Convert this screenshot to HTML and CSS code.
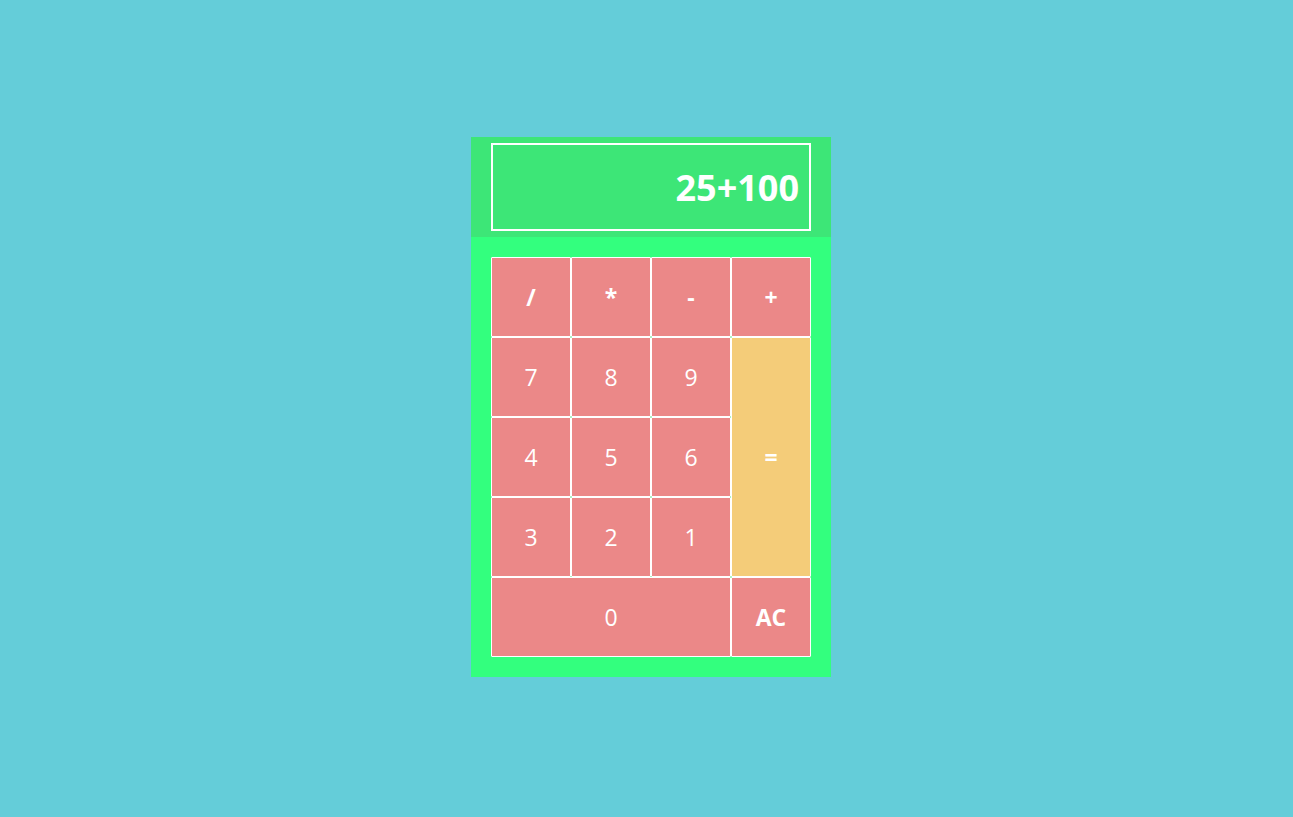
FILE: index.html
```html
<!DOCTYPE html>
<html>
<head>
<meta charset="utf-8">
<link rel="stylesheet" href="styles.css">
</head>
<body>
<div class="calc">
  <div class="top">
    <div class="display">25+100</div>
  </div>
  <div class="keys">
    <button class="key op">/</button>
    <button class="key op">*</button>
    <button class="key op">-</button>
    <button class="key op">+</button>
    <button class="key">7</button>
    <button class="key">8</button>
    <button class="key">9</button>
    <button class="key op eq">=</button>
    <button class="key">4</button>
    <button class="key">5</button>
    <button class="key">6</button>
    <button class="key">3</button>
    <button class="key">2</button>
    <button class="key">1</button>
    <button class="key zero">0</button>
    <button class="key op">AC</button>
  </div>
</div>
</body>
</html>
```
FILE: styles.css
```css
html, body {
  margin: 0;
  padding: 0;
}
body {
  background: #64cdd9;
  width: 1293px;
  height: 817px;
  font-family: "Open Sans", "DejaVu Sans", sans-serif;
  display: flex;
  justify-content: center;
  padding-top: 137px;
  box-sizing: border-box;
}
.calc {
  width: 360px;
  height: 540px;
  margin-left: 9px;
  display: flex;
  flex-direction: column;
  background: #33ff7e;
}
.top {
  height: 100px;
  background: #3de677;
  padding: 6px 20px;
  box-sizing: border-box;
}
.display {
  height: 88px;
  border: 2px solid #ffffff;
  box-sizing: border-box;
  color: #ffffff;
  font-weight: 700;
  font-size: 36px;
  display: flex;
  align-items: center;
  justify-content: flex-end;
  padding-right: 10px;
  padding-top: 1px;
}
.keys {
  margin: 20px;
  display: grid;
  grid-template-columns: repeat(4, 80px);
  grid-template-rows: repeat(5, 80px);
}
.key {
  background: #eb8888;
  border: 1px solid #ffffff;
  border-radius: 1px;
  color: #ffffff;
  font-family: "Open Sans", "DejaVu Sans", sans-serif;
  font-size: 23px;
  padding: 0;
  margin: 0;
}
.op {
  font-weight: 700;
}
.eq {
  grid-column: 4;
  grid-row: 2 / span 3;
  background: #f4cc79;
}
.zero {
  grid-column: 1 / span 3;
}
```
